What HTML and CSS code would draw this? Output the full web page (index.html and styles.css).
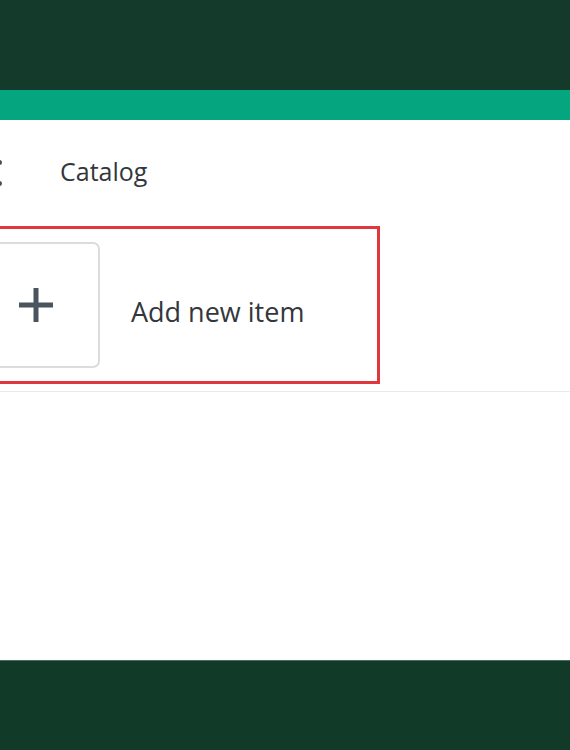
FILE: index.html
```html
<!DOCTYPE html>
<html>
<head>
<meta charset="utf-8">
<link rel="stylesheet" href="styles.css">
</head>
<body>
<header class="topbar"></header>
<div class="band"></div>
<main class="main">
  <div class="crumbs">
    <span class="dots"><i></i><i></i></span>
    <span class="crumb-title">Catalog</span>
  </div>
  <div class="add-row">
    <div class="add-box">
      <div class="add-card">
        <svg width="38" height="38" viewBox="0 0 38 38"><path d="M19 2V36M2 19H36" stroke="#49545c" stroke-width="5" fill="none"/></svg>
      </div>
      <span class="add-label">Add new item</span>
    </div>
  </div>
  <div class="sep"></div>
</main>
<footer class="footer"></footer>
</body>
</html>
```
FILE: styles.css
```css
html, body {
  margin: 0;
  padding: 0;
  background: #ffffff;
  font-family: "Open Sans", "Noto Sans", sans-serif;
}
body {
  width: 570px;
  height: 750px;
  overflow: hidden;
  display: flex;
  flex-direction: column;
}
.topbar {
  height: 90px;
  background: #133a2a;
  flex: none;
}
.band {
  height: 30px;
  background: #05a57f;
  flex: none;
}
.main {
  height: 540px;
  flex: none;
  background: #fff;
  display: flex;
  flex-direction: column;
}
.crumbs {
  height: 106px;
  display: flex;
  align-items: center;
  padding-bottom: 4px;
  box-sizing: border-box;
}
.dots {
  width: 63px;
  margin-left: -3px;
  display: flex;
  flex-direction: column;
  gap: 16px;
  align-self: center;
  margin-top: 4px;
}
.dots i {
  display: block;
  width: 5px;
  height: 5px;
  border-radius: 50%;
  background: #4a4f55;
}
.crumb-title {
  font-size: 25px;
  color: #33373c;
}
.add-row {
  display: flex;
}
.add-box {
  margin-left: -40px;
  width: 420px;
  height: 158px;
  box-sizing: border-box;
  border: 3px solid #e0363e;
  display: flex;
  align-items: flex-start;
  padding: 13px 0 0 2px;
}
.add-card {
  width: 135px;
  height: 126px;
  box-sizing: border-box;
  border: 2px solid #dcdcdc;
  border-radius: 7px;
  display: flex;
  align-items: center;
  justify-content: flex-end;
  padding-right: 43px;
}
.add-label {
  margin-left: 31px;
  margin-top: 51px;
  font-size: 27px;
  color: #33373c;
}
.sep {
  margin-top: 7px;
  height: 1px;
  background: #e6eaed;
}
.footer {
  height: 90px;
  flex: none;
  background: #123a29;
  border-top: 1px solid #4d6b5e;
}
```
